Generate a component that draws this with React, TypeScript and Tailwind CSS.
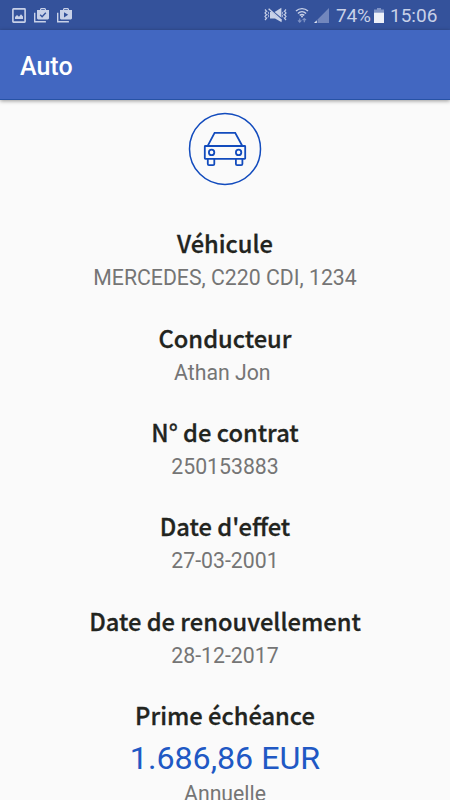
import { clsx } from "clsx"

interface ContractField {
  label: string
  value: string
  note?: string
}

const fields: ContractField[] = [
  { label: "Véhicule", value: "MERCEDES, C220 CDI, 1234" },
  { label: "Conducteur", value: "Athan Jon\u00a0" },
  { label: "N° de contrat", value: "250153883" },
  { label: "Date d'effet", value: "27-03-2001" },
  { label: "Date de renouvellement", value: "28-12-2017" },
  { label: "Prime échéance", value: "1.686,86 EUR", note: "Annuelle" },
]

function PictureIcon() {
  return (
    <svg className="h-[15px] w-[14px]" viewBox="0 0 14 15" fill="none">
      <rect x="0.9" y="0.9" width="12.2" height="13.2" rx="0.6" stroke="currentColor" strokeWidth="1.6" />
      <path d="M3 11V9l2-2 2 1.7L9 6.2l2 2.4V11z" fill="currentColor" />
    </svg>
  )
}

function BagIcon({ type }: { type: "check" | "play" }) {
  return (
    <svg className="h-[15px] w-[15px]" viewBox="0 0 15 15" fill="none">
      <path d="M0.7 4.8v9h11.2" stroke="currentColor" strokeWidth="1.4" />
      <path
        fillRule="evenodd"
        fill="currentColor"
        d="M3 2h3V1l1-1h4l1 1v1h3v8.6l-1 1H4l-1-1zM7.2 1.2V2h3.6v-.8z"
      />
      {type === "check" ? (
        <path d="M6.2 6.8l1.9 1.9 3.7-3.9" stroke="#34529b" strokeWidth="1.4" />
      ) : (
        <path d="M7 4.2v5.2l4.2-2.6z" fill="#34529b" />
      )}
    </svg>
  )
}

function VibrateIcon() {
  return (
    <svg className="h-[16px] w-[23px]" viewBox="0 0 23 16" fill="none">
      <path d="M1 2.5l1.5 1.7L1 5.9l1.5 1.8L1 9.5l1.5 1.7L1 13" stroke="currentColor" strokeWidth="1.2" />
      <path d="M3.8 4.6l1 1.5-1 1.5 1 1.5-1 1.5" stroke="currentColor" strokeWidth="0.8" />
      <path d="M22 2.5l-1.5 1.7L22 5.9l-1.5 1.8L22 9.5l-1.5 1.7L22 13" stroke="currentColor" strokeWidth="1.2" />
      <path d="M19.2 4.6l-1 1.5 1 1.5-1 1.5 1 1.5" stroke="currentColor" strokeWidth="0.8" />
      <path d="M6 5h1.6l10 8.3v1.9L11 11.4H6z" fill="currentColor" />
      <path d="M10.6 5L17.4 0.8v10z" fill="currentColor" />
      <path d="M4.6 1.8l13 11.4" stroke="currentColor" strokeWidth="1.4" />
    </svg>
  )
}

function WifiIcon() {
  return (
    <svg className="h-[16px] w-[14px]" viewBox="0 0 14 16" fill="none">
      <path
        d="M1 4.1c3.4-3.3 8.6-3.3 12 0M2.9 6.4c2.4-2.2 5.8-2.2 8.2 0M4.7 8.4c1.4-1.2 3.2-1.2 4.6 0"
        stroke="currentColor"
        strokeWidth="1.4"
      />
      <circle cx="7" cy="9.6" r="1" fill="currentColor" />
      <path
        d="M4.7 15.2v-3.7M3 13.4l1.7 1.7 1.7-1.7M9.3 11.5v3.8M7.6 13.2l1.7-1.7 1.7 1.7"
        stroke="#7f93c5"
        strokeWidth="1.2"
      />
    </svg>
  )
}

function SignalIcon() {
  return (
    <svg className="h-[15px] w-[15px]" viewBox="0 0 15 15">
      <path d="M3.6 11.4L15 0v15H3.6z" fill="#7287bd" />
      <path d="M0 15l2.8-2.8V15z" fill="#e3e8f4" />
    </svg>
  )
}

function BatteryIcon() {
  return (
    <svg className="h-[15px] w-[10px]" viewBox="0 0 10 15">
      <path d="M3 0h4v1.5h3V5H0V1.5h3z" fill="#7f93c5" />
      <path d="M0 4.7h10V15H0z" fill="#edf0f8" />
    </svg>
  )
}

function CarIcon() {
  return (
    <svg className="h-[74px] w-[74px]" viewBox="0 0 74 74" fill="none" stroke="#124bbd">
      <circle cx="37" cy="36.9" r="35.5" strokeWidth="1.5" />
      <g strokeWidth="1.8">
        <path d="M19.7 33.8l6.9-12.9h20.6l7 12.9" />
        <rect x="16.8" y="34" width="40.4" height="12.8" rx="0.5" />
        <circle cx="23.6" cy="40.4" r="2.7" />
        <circle cx="50.6" cy="40.4" r="2.7" />
        <path d="M19.8 47v5q0 1.2 1.2 1.2h4.1q1.2 0 1.2-1.2v-5M47.9 47v5q0 1.2 1.2 1.2h4.1q1.2 0 1.2-1.2v-5" />
      </g>
    </svg>
  )
}

function StatusBar() {
  return (
    <div className="flex h-[30px] shrink-0 items-center bg-[#34529b] pl-3 pr-[13px] text-[#c8d1e8]">
      <div className="flex items-center gap-2">
        <PictureIcon />
        <BagIcon type="check" />
        <BagIcon type="play" />
      </div>
      <div className="ml-auto flex items-center">
        <VibrateIcon />
        <span className="ml-[8px] flex">
          <WifiIcon />
        </span>
        <span className="ml-[5px] flex">
          <SignalIcon />
        </span>
        <span className="ml-[7px] w-[35px] whitespace-nowrap pt-px text-[19px] leading-[30px] tracking-[-0.2px]">
          74%
        </span>
        <span className="ml-[3px] flex">
          <BatteryIcon />
        </span>
        <span className="ml-[6px] w-[47px] whitespace-nowrap pt-px text-[19px] leading-[30px]">15:06</span>
      </div>
    </div>
  )
}

function Field({ label, value, note }: ContractField) {
  return (
    <div className="h-[94.4px] text-center">
      <h2 className="font-['Noto_Sans_CJK_JP','Noto_Sans',sans-serif] text-[23.7px] font-medium leading-[34px] text-[#22241e] [-webkit-text-stroke:0.3px_#22241e]">
        {label}
      </h2>
      <p
        className={clsx(
          note ? "text-[32.2px] leading-[53px] text-[#2058c4]" : "text-[21.25px] leading-[36px] text-[#757575]",
        )}
      >
        {value}
      </p>
      {note && <p className="text-[21.25px] leading-[18px] text-[#757575]">{note}</p>}
    </div>
  )
}

export default function App() {
  return (
    <div className="flex h-[800px] w-[450px] flex-col overflow-hidden bg-[#fafafa] font-['Roboto',sans-serif]">
      <StatusBar />
      <header className="z-10 flex h-[70px] shrink-0 items-center border-b border-[#2752a5] bg-[#4267c1] pl-5 pt-[4px] shadow-[0_1px_4px_rgba(0,0,0,0.4)]">
        <h1 className="text-[25px] font-medium text-white">Auto</h1>
      </header>
      <main className="flex-1">
        <div className="flex justify-center pt-3">
          <CarIcon />
        </div>
        <div className="pt-[40.2px]">
          {fields.map((field) => (
            <Field key={field.label} {...field} />
          ))}
        </div>
      </main>
    </div>
  )
}
